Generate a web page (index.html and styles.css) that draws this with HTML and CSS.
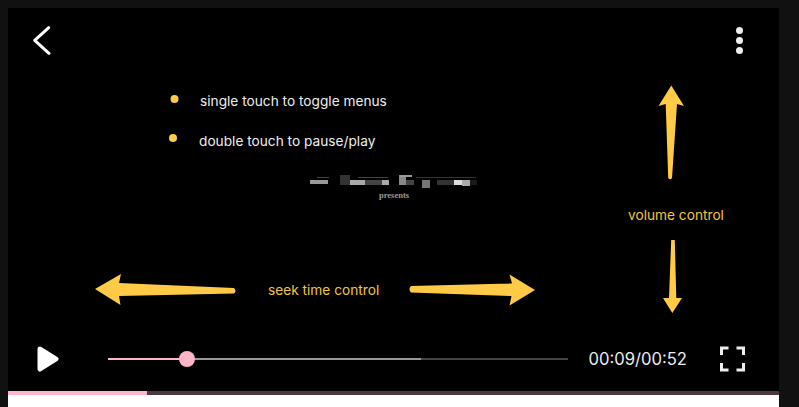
FILE: index.html
```html
<!DOCTYPE html>
<html lang="en">
<head>
    <meta charset="UTF-8">
    <meta name="viewport" content="width=device-width, initial-scale=1.0">
    <title>Video Player Help</title>
    <link rel="stylesheet" href="styles.css">
</head>
<body>

<div class="page">
    <div class="player">
        <div class="top-bar">
            <svg class="back-icon" width="18" height="30" viewBox="0 0 18 30">
                <path d="M15.7 2.7 L1.7 15.3 L16 28.300"/>
            </svg>
            <div class="more-icon">
                <span></span>
                <span></span>
                <span></span>
            </div>
        </div>

        <div class="controls">
            <svg class="play-icon" width="24" height="28" viewBox="0 0 24 28">
                <path d="M5 4 L21 14 L5 24 Z"/>
            </svg>
            <div class="track">
                <div class="track-buffer" style="width: 68%"></div>
                <div class="track-played" style="width: 17.2%"></div>
                <div class="track-thumb" style="left: 17.2%"></div>
            </div>
            <span class="time">00:09/00:52</span>
            <svg class="full-icon" width="26" height="26" viewBox="0 0 26 26">
                <path d="M1.500 9 V2 H8.500 M16.500 2 H23.500 V9 M23.500 17 V24 H16.500 M8.500 24 H1.500 V17"/>
            </svg>
        </div>

        <!-- help overlay, viewBox uses page coordinates -->
        <svg class="arrows" width="771" height="383" viewBox="8 8 771 383">
            <path d="M95 289 L121 274 L119 283 L234 288 Q237 291 234 293.500 L119 296 L120.500 305 Z"/>
            <path d="M535 290 L509.500 274.500 L512 283.500 L411 286 Q408 289 411 292.500 L511.500 296 L509.500 305.500 Z"/>
            <path d="M671.300 85.500 L658.500 106 L665.700 104 L668.200 178 Q670 180.500 672 178 L677 104 L684 106 Z"/>
            <path d="M672.300 313 L663 298 L669 298 L671.200 240 L674.800 240 L676.300 298 L682 298 Z"/>
            <circle cx="174.500" cy="99" r="4"/>
            <circle cx="173" cy="138" r="4"/>
        </svg>

        <span class="hint hint-toggle">single touch to toggle menus</span>
        <span class="hint hint-pause">double touch to pause/play</span>
        <span class="label label-seek">seek time control</span>
        <span class="label label-volume">volume control</span>

        <div class="title-card">
            <svg class="title-blur" width="172" height="16" viewBox="0 0 172 16">
                <rect x="2" y="6" width="18" height="4" fill="#999"/>
                <rect x="9" y="3" width="12" height="1" fill="#444"/>
                <rect x="32" y="1" width="10" height="10" fill="#333"/>
                <rect x="42" y="6" width="15" height="5" fill="#aaa"/>
                <rect x="50" y="3" width="30" height="1" fill="#444"/>
                <rect x="57" y="6" width="17" height="5" fill="#444"/>
                <rect x="74" y="6" width="7" height="5" fill="#aaa"/>
                <rect x="91" y="1" width="7" height="10" fill="#888"/>
                <rect x="92" y="1" width="12" height="2" fill="#999"/>
                <rect x="98" y="6" width="8" height="5" fill="#444"/>
                <rect x="108" y="3" width="60" height="1" fill="#333"/>
                <rect x="114" y="6" width="8" height="8" fill="#777"/>
                <rect x="129" y="6" width="17" height="5" fill="#333"/>
                <rect x="146" y="6" width="8" height="5" fill="#ddd"/>
                <rect x="154" y="6" width="8" height="6" fill="#aaa"/>
                <rect x="162" y="6" width="7" height="5" fill="#1a1a1a"/>
            </svg>
            <span class="presents">presents</span>
        </div>
    </div>

    <div class="progress">
        <div class="progress-fill" style="width: 18%"></div>
    </div>
    <div class="strip"></div>
</div>

</body>
</html>
```

FILE: styles.css
```css
* {
    box-sizing: border-box;
}
html, body {
    margin: 0;
    height: 100%;
    overflow: hidden;
}
body {
    font-family: Inter, "Liberation Sans", sans-serif;
    background-color: #111;
}
.page {
    display: flex;
    flex-direction: column;
    height: 407px;
    padding: 8px 20px 0 8px;
}
.player {
    position: relative;
    display: flex;
    flex-direction: column;
    justify-content: space-between;
    height: 383px;
    background: #000;
}
.top-bar {
    display: flex;
    justify-content: space-between;
    padding: 17px 36px 0 25px;
}
.back-icon path {
    fill: none;
    stroke: #fff;
    stroke-width: 3;
    stroke-linecap: round;
    stroke-linejoin: round;
}
.more-icon {
    display: flex;
    flex-direction: column;
    gap: 3px;
    padding-top: 2px;
}
.more-icon span {
    width: 7px;
    height: 7px;
    border-radius: 50%;
    background: #eee;
}
.controls {
    display: flex;
    align-items: center;
    padding: 0 33px 15px 27px;
    height: 50px;
}
.play-icon path {
    fill: #fff;
    stroke: #fff;
    stroke-width: 5;
    stroke-linejoin: round;
}
.track {
    position: relative;
    flex: 1;
    height: 2px;
    margin: 0 21px 0 49px;
    background: #444;
}
.track-buffer, .track-played {
    position: absolute;
    left: 0;
    top: 0;
    height: 100%;
}
.track-buffer {
    background: #999;
}
.track-played {
    background: #ffb6c8;
}
.track-thumb {
    position: absolute;
    top: -7px;
    width: 16px;
    height: 16px;
    margin-left: -8px;
    border-radius: 50%;
    background: #ffb6c8;
}
.time {
    color: #eee;
    font-size: 16.600px;
    margin-right: 33px;
}
.full-icon path {
    fill: none;
    stroke: #eee;
    stroke-width: 3;
}
.arrows {
    position: absolute;
    left: 0;
    top: 0;
    fill: #ffcb47;
}
.hint, .label {
    position: absolute;
    font-size: 13.700px;
    line-height: 16px;
}
.hint {
    color: #eee;
}
.label {
    color: #f2c544;
}
.hint-toggle {
    left: 192px;
    top: 85px;
}
.hint-pause {
    left: 191px;
    top: 125px;
}
.label-seek {
    left: 260px;
    top: 274px;
}
.label-volume {
    left: 620px;
    top: 199px;
}
.title-card {
    position: absolute;
    left: 300px;
    top: 166px;
    width: 172px;
    display: flex;
    flex-direction: column;
    align-items: center;
}
.title-blur {
    filter: blur(0.6px);
}
.presents {
    font-family: "Liberation Serif", serif;
    font-size: 8.500px;
    font-weight: bold;
    line-height: 10px;
    color: #999;
}
.progress {
    height: 4px;
    background: #4a3a40;
}
.progress-fill {
    height: 100%;
    background: #ffb6c8;
}
.strip {
    flex: 1;
    background: #fff;
}
```
